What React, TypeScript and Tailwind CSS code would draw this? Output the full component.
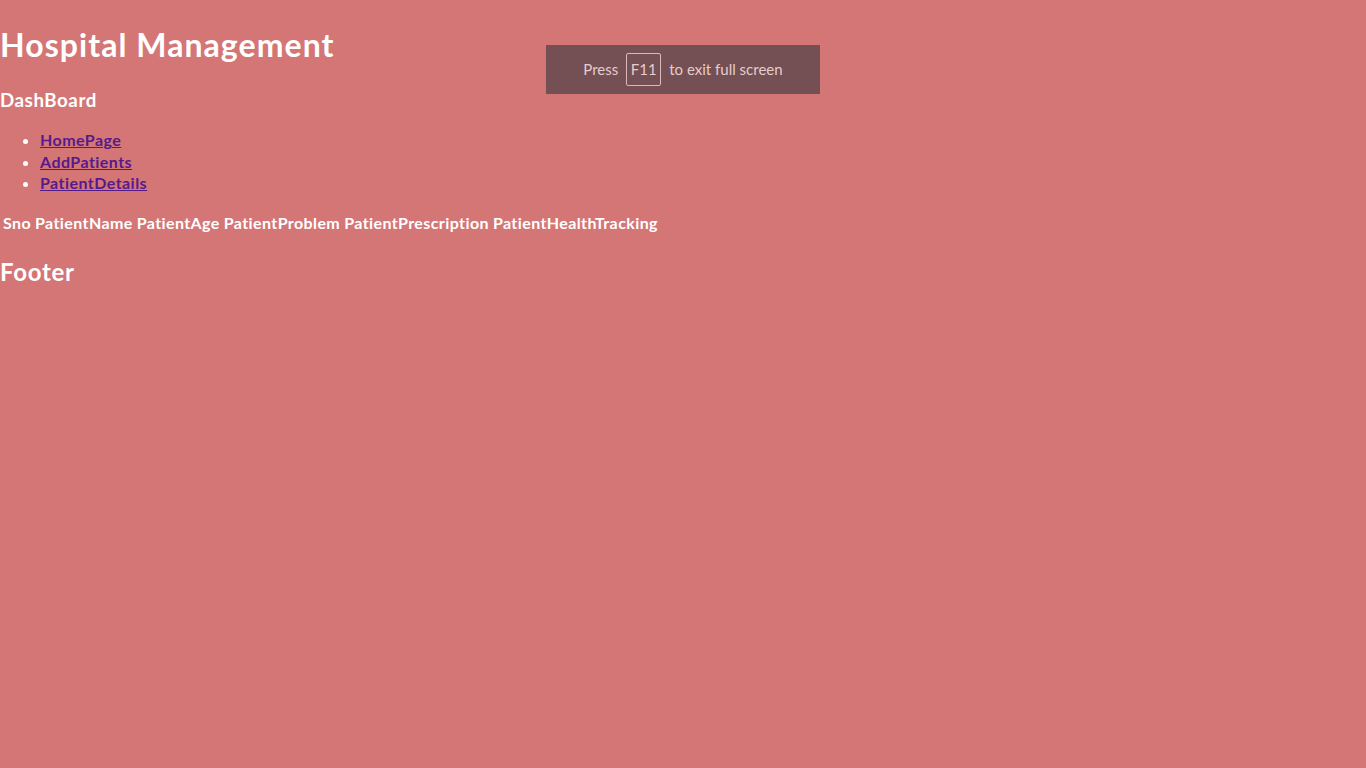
import React from 'react';

const columns = ['Sno', 'PatientName', 'PatientAge', 'PatientProblem', 'PatientPrescription', 'PatientHealthTracking'];
const links = ['HomePage', 'AddPatients', 'PatientDetails'];

const App: React.FC = () => {
  return (
    <div className="min-h-screen w-full bg-[#d47676] text-white font-['Lato','Open_Sans',sans-serif] leading-[1.33] flow-root relative">
      <h1 className="text-[32px] font-bold mt-[24px] mb-[21.44px] tracking-[0.033em]">Hospital Management</h1>
      <h3 className="text-[18.72px] font-bold mt-[18.72px] mb-[16.5px] tracking-[0.03em]">DashBoard</h3>
      <ul className="list-disc pl-10 my-4 text-[16px] font-bold tracking-[0.028em]">
        {links.map((l) => (
          <li key={l}>
            <a href="#" className="text-[#551a8b] underline">{l}</a>
          </li>
        ))}
      </ul>
      <table className="border-separate border-spacing-[2px] text-[16px] tracking-[0.025em]">
        <thead>
          <tr>
            {columns.map((c) => (
              <th key={c} className="p-px font-bold">{c}</th>
            ))}
          </tr>
        </thead>
        <tbody></tbody>
      </table>
      <h2 className="text-[24px] font-bold my-[19.92px] tracking-[0.03em]">Footer</h2>

      {/* browser fullscreen hint */}
      <div className="absolute left-[546px] top-[45px] w-[274px] h-[49px] bg-[#744f53] flex items-center justify-center gap-2 text-[15px] text-[#e6cccc] leading-none">
        <span>Press</span>
        <span className="w-[35px] h-[33px] border border-[#d9b9b9] rounded-[2px] flex items-center justify-center">F11</span>
        <span>to exit full screen</span>
      </div>
    </div>
  );
};

export default App;
